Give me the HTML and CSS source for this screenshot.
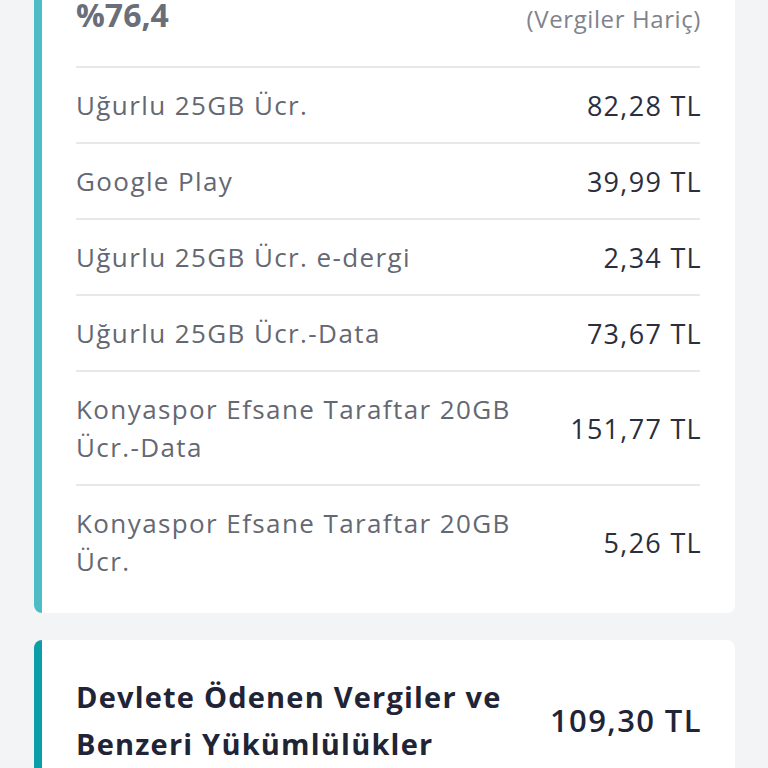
FILE: index.html
```html
<!DOCTYPE html>
<html lang="tr">

<head>
    <meta charset="UTF-8">
    <meta name="viewport" content="width=device-width, initial-scale=1.0">
    <title>Fatura Detayı</title>
    <link rel="stylesheet" href="styles.css">
</head>

<body>
    <div class="bill__container">
        <div class="bill__card bill__card--light">
            <div class="bill__head">
                <span class="bill__percent">%76,4</span>
                <span class="bill__note">(Vergiler Hariç)</span>
            </div>
            <div class="bill__row">
                <span class="bill__label">Uğurlu 25GB Ücr.</span>
                <span class="bill__value">82,28 TL</span>
            </div>
            <div class="bill__row">
                <span class="bill__label">Google Play</span>
                <span class="bill__value">39,99 TL</span>
            </div>
            <div class="bill__row">
                <span class="bill__label">Uğurlu 25GB Ücr. e-dergi</span>
                <span class="bill__value">2,34 TL</span>
            </div>
            <div class="bill__row">
                <span class="bill__label">Uğurlu 25GB Ücr.-Data</span>
                <span class="bill__value">73,67 TL</span>
            </div>
            <div class="bill__row">
                <span class="bill__label">Konyaspor Efsane Taraftar 20GB Ücr.-Data</span>
                <span class="bill__value">151,77 TL</span>
            </div>
            <div class="bill__row">
                <span class="bill__label">Konyaspor Efsane Taraftar 20GB Ücr.</span>
                <span class="bill__value">5,26 TL</span>
            </div>
        </div>

        <div class="bill__card bill__card--dark">
            <div class="bill__total">
                <span class="bill__title">Devlete Ödenen Vergiler ve Benzeri Yükümlülükler</span>
                <span class="bill__sum">109,30 TL</span>
            </div>
        </div>
    </div>
</body>

</html>
```
FILE: styles.css
```css
* {
    box-sizing: border-box;
    margin: 0;
}

body {
    background-color: #f3f4f6;
    font-family: "Open Sans", "Noto Sans", sans-serif;
    overflow: hidden;
}

.bill__container {
    display: flex;
    flex-direction: column;
    gap: 27px;
    padding: 0 33px 0 34px;
    margin-top: -38px;
}

.bill__card {
    background-color: #fff;
    border-radius: 8px;
    border-left: 8px solid #4dbcc5;
    padding: 0 35px 15px 34px;
}

.bill__card--dark {
    border-left-color: #0a9fa8;
    padding-top: 33px;
}

.bill__head {
    display: flex;
    justify-content: space-between;
    align-items: flex-end;
    height: 106px;
    padding-bottom: 35px;
    border-bottom: 2px solid #e7e8eb;
}

.bill__percent {
    font-size: 32px;
    font-weight: 700;
    color: #6a6e7a;
    line-height: 1;
}

.bill__note {
    font-size: 24px;
    letter-spacing: 0.6px;
    margin-right: -1px;
    color: #80838c;
    line-height: 1;
}

.bill__row {
    display: flex;
    justify-content: space-between;
    align-items: center;
    gap: 40px;
    padding: 18px 0;
    border-bottom: 2px solid #e7e8eb;
}

.bill__row:last-child {
    border-bottom: 0;
}

.bill__label {
    font-size: 26px;
    letter-spacing: 1.4px;
    line-height: 38px;
    color: #646872;
    max-width: 450px;
}

.bill__value {
    font-size: 27px;
    font-weight: 500;
    letter-spacing: 1.3px;
    margin-right: -2px;
    color: #2a2e3d;
    white-space: nowrap;
}

.bill__total {
    display: flex;
    justify-content: space-between;
    align-items: center;
    gap: 30px;
}

.bill__title {
    font-size: 29px;
    font-weight: bold;
    letter-spacing: 1.2px;
    line-height: 47px;
    color: #1f2436;
    max-width: 440px;
}

.bill__sum {
    font-size: 31px;
    font-weight: 600;
    letter-spacing: 1.4px;
    margin-right: -2px;
    color: #1f2436;
    white-space: nowrap;
}
```
